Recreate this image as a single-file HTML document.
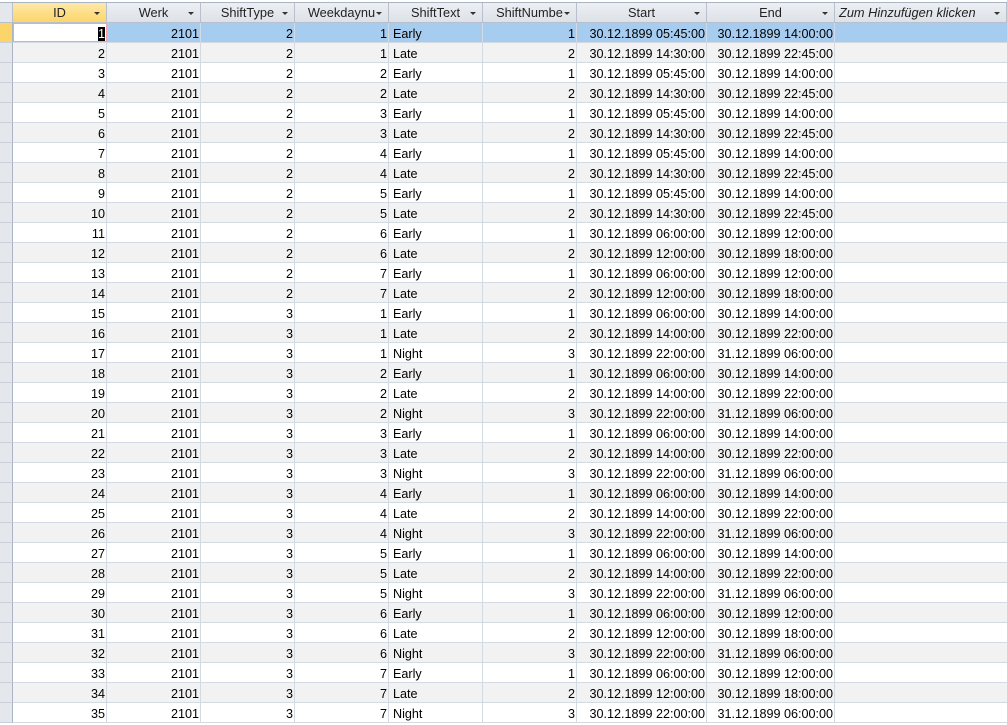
<!DOCTYPE html>
<html><head><meta charset="utf-8"><style>
*{margin:0;padding:0;box-sizing:border-box}
body{width:1007px;height:721px;overflow:hidden;background:#fff;font-family:"Liberation Sans",sans-serif;font-size:12.6px;color:#000;position:relative}
.top{position:absolute;left:0;top:0;width:1007px;height:3px;background:#fff;border-bottom:1px solid #a9b4c4}
.hdr{position:absolute;top:3px;height:20px;background:linear-gradient(#eceff3,#dde2e8);border-right:1px solid #b7c0cc;border-bottom:1px solid #b7c0cc;line-height:20px;text-align:center;color:#222;font-size:12.8px}
.hdr.id{background:linear-gradient(#ffe9a8,#fcd56a)}
.hdr i{position:absolute;right:6px;top:9px;width:0;height:0;border-left:3px solid transparent;border-right:3px solid transparent;border-top:3px solid #333}
.hdr.z{text-align:left;padding-left:4px;font-style:italic}
.sel{position:absolute;left:0;width:13px;height:20px;background:#e4e7ec;border-right:1px solid #a9b4c4;border-bottom:1px solid #c9d0da}
.row{position:absolute;left:13px;width:994px;height:20px;border-bottom:1px solid #d3dae4}
.row.e{background:#f2f2f2}
.row.s{background:#a6cdf0}
.c{position:absolute;top:0;height:19px;line-height:22px;border-right:1px solid #d3dae4;padding:0 1px;text-align:right;white-space:nowrap}
.l{text-align:left;padding-left:4px}
</style></head><body>
<div class="top"></div>
<div class="hdr" style="left:0;width:13px;background:#e4e7ec"></div>
<div class="hdr id" style="left:13px;width:94px">ID<i></i></div>
<div class="hdr" style="left:107px;width:94px">Werk<i></i></div>
<div class="hdr" style="left:201px;width:94px">ShiftType<i></i></div>
<div class="hdr" style="left:295px;width:94px">Weekdaynu<i></i></div>
<div class="hdr" style="left:389px;width:94px">ShiftText<i></i></div>
<div class="hdr" style="left:483px;width:94px">ShiftNumbe<i></i></div>
<div class="hdr" style="left:577px;width:130px">Start<i></i></div>
<div class="hdr" style="left:707px;width:128px">End<i></i></div>
<div class="hdr z" style="left:835px;width:172px">Zum Hinzufügen klicken<i></i></div>
<div id="rows"></div>
<script>
var rows=[];
for(var w=1;w<=5;w++){rows.push([2,w,'Early',1,'30.12.1899 05:45:00','30.12.1899 14:00:00']);rows.push([2,w,'Late',2,'30.12.1899 14:30:00','30.12.1899 22:45:00']);}
for(var w=6;w<=7;w++){rows.push([2,w,'Early',1,'30.12.1899 06:00:00','30.12.1899 12:00:00']);rows.push([2,w,'Late',2,'30.12.1899 12:00:00','30.12.1899 18:00:00']);}
for(var w=1;w<=5;w++){rows.push([3,w,'Early',1,'30.12.1899 06:00:00','30.12.1899 14:00:00']);rows.push([3,w,'Late',2,'30.12.1899 14:00:00','30.12.1899 22:00:00']);rows.push([3,w,'Night',3,'30.12.1899 22:00:00','31.12.1899 06:00:00']);}
for(var w=6;w<=7;w++){rows.push([3,w,'Early',1,'30.12.1899 06:00:00','30.12.1899 12:00:00']);rows.push([3,w,'Late',2,'30.12.1899 12:00:00','30.12.1899 18:00:00']);rows.push([3,w,'Night',3,'30.12.1899 22:00:00','31.12.1899 06:00:00']);}
var h='';
for(var i=0;i<35;i++){var r=rows[i],y=23+i*20;
h+='<div class="sel" style="top:'+y+'px'+(i==0?';background:#fcd56a':'')+'"></div>';
h+='<div class="row'+(i==0?' s':(i%2?' e':''))+'" style="top:'+y+'px">';
h+='<div class="c" style="left:0;width:94px'+(i==0?';background:#fff;border:1px solid #f4a3a8;line-height:20px':'')+'">'+(i==0?'<span style="background:#000;color:#fff">1</span>':(i+1))+'</div>';
h+='<div class="c" style="left:94px;width:94px">2101</div>';
h+='<div class="c" style="left:188px;width:94px">'+r[0]+'</div>';
h+='<div class="c" style="left:282px;width:94px">'+r[1]+'</div>';
h+='<div class="c l" style="left:376px;width:94px">'+r[2]+'</div>';
h+='<div class="c" style="left:470px;width:94px">'+r[3]+'</div>';
h+='<div class="c" style="left:564px;width:130px">'+r[4]+'</div>';
h+='<div class="c" style="left:694px;width:128px">'+r[5]+'</div>';
h+='</div>';}
document.getElementById('rows').innerHTML=h;
</script>
</body></html>
